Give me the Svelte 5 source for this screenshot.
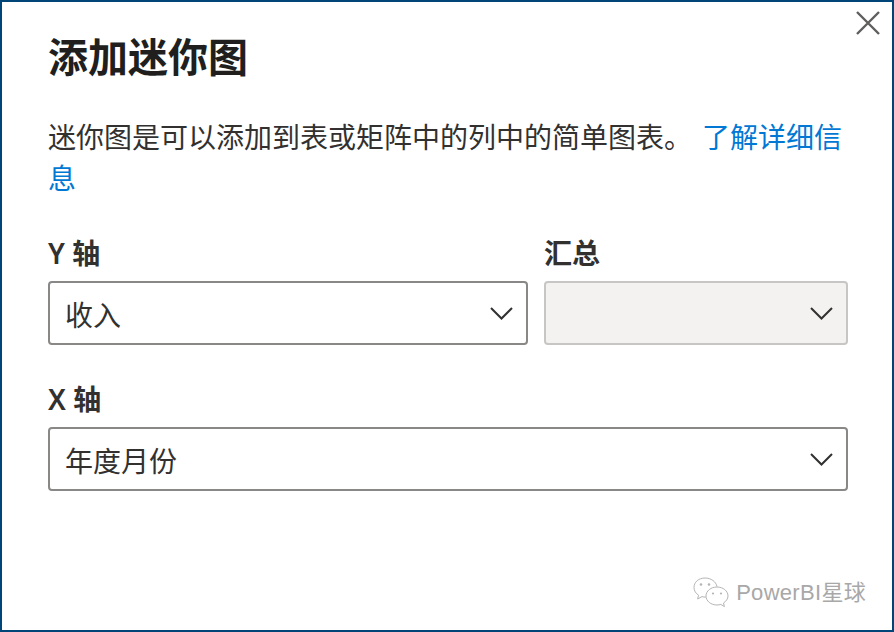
<script>
  const chevron = 'M1 1 L11.5 11.5 L22 1';
</script>

<div class="dialog">
  <button class="close" aria-label="关闭">
    <svg width="26" height="26" viewBox="0 0 26 26"><path d="M2 2 L24 24 M24 2 L2 24" /></svg>
  </button>
  <h1>添加迷你图</h1>
  <p class="desc">迷你图是可以添加到表或矩阵中的列中的简单图表。<a href="#top">了解详细信息</a></p>
  <div class="row first">
    <div class="field y">
      <div class="label">Y 轴</div>
      <div class="select"><span>收入</span><svg class="chev" width="24" height="14" viewBox="0 0 24 14"><path d={chevron} /></svg></div>
    </div>
    <div class="field sum">
      <div class="label">汇总</div>
      <div class="select disabled"><span></span><svg class="chev" width="24" height="14" viewBox="0 0 24 14"><path d={chevron} /></svg></div>
    </div>
  </div>
  <div class="row second">
    <div class="field x">
      <div class="label">X 轴</div>
      <div class="select"><span>年度月份</span><svg class="chev" width="24" height="14" viewBox="0 0 24 14"><path d={chevron} /></svg></div>
    </div>
  </div>
  <div class="watermark">
    <svg width="36" height="34" viewBox="0 0 36 34">
      <path d="M12 2 C5.5 2 1 6.2 1 11.5 C1 14.8 2.8 17.4 5.6 19.2 L4.6 23 L9 20.6 C10.3 21 11.4 21.1 12.8 21.1" />
      <path d="M12 2 C18 2 23 5.6 24 10.6" />
      <path d="M24 11 C17.8 11 13 15 13 20 C13 25 17.8 29 24 29 C25.4 29 26.6 28.8 27.8 28.4 L31.4 30.6 L30.5 27 C33.2 25.2 35 22.8 35 20 C35 15 30.2 11 24 11 Z" />
      <circle class="dot" cx="8" cy="8.5" r="1.3" /><circle class="dot" cx="16" cy="8.5" r="1.3" />
      <circle class="dot" cx="20" cy="17.5" r="1.1" /><circle class="dot" cx="28" cy="17.5" r="1.1" />
    </svg>
    <span>PowerBI星球</span>
  </div>
</div>

<style>
  :global(body) { margin: 0; background: #fff; }
  .dialog {
    position: relative;
    box-sizing: border-box;
    width: 894px;
    height: 632px;
    border: 2px solid #004578;
    padding: 26px 44px 0 46px;
    background: #fff;
    color: #252423;
    font-family: "Noto Sans", "Noto Sans CJK SC", sans-serif;
  }
  h1 {
    margin: 0;
    font-size: 40px;
    line-height: 54px;
    font-weight: 700;
    color: #201f1e;
    font-family: "Noto Sans CJK SC", sans-serif;
  }
  .desc {
    margin: 34px 0 0;
    font-size: 28px;
    line-height: 41px;
    width: 800px;
    color: #323130;
    font-family: "Noto Sans CJK SC", sans-serif;
  }
  .desc a { color: #0078d4; text-decoration: none; margin-left: 10px; }
  .row { display: flex; gap: 16px; }
  .first { margin-top: 35px; }
  .second { margin-top: 34px; }
  .field.y { width: 480px; }
  .field.sum { width: 304px; }
  .field.x { width: 800px; }
  .label {
    font-size: 28px;
    line-height: 40px;
    font-weight: 600;
    color: #323130;
    margin-bottom: 8px;
  }
  .select {
    box-sizing: border-box;
    height: 64px;
    border: 2px solid #8a8886;
    border-radius: 4px;
    display: flex;
    align-items: center;
    justify-content: space-between;
    padding: 2px 12px 0 15px;
    font-size: 28px;
    color: #323130;
    font-family: "Noto Sans CJK SC", sans-serif;
  }
  .select.disabled { background: #f3f2f1; border-color: #c8c6c4; }
  .chev path { fill: none; stroke: #323130; stroke-width: 2; }
  .close {
    position: absolute;
    top: 8px;
    right: 11px;
    width: 26px;
    height: 26px;
    padding: 0;
    border: 0;
    background: none;
    display: block;
  }
  .close path { fill: none; stroke: #605e5c; stroke-width: 2.4; }
  .watermark {
    position: absolute;
    right: 26px;
    bottom: 20px;
    display: flex;
    align-items: center;
    gap: 7px;
    font-size: 22px;
    line-height: 30px;
    color: #a8a8a8;
    letter-spacing: 0.3px;
    font-family: "Liberation Sans", "Noto Sans CJK SC", sans-serif;
  }
  .watermark path { fill: none; stroke: #b5b5b5; stroke-width: 1; }
  .watermark .dot { fill: #b5b5b5; }
</style>
